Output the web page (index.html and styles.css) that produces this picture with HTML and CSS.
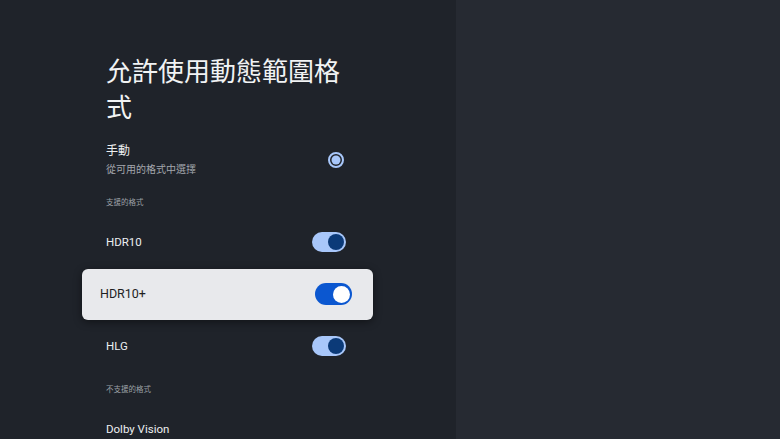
FILE: index.html
```html
<!DOCTYPE html>
<html lang="zh-Hant">
<head>
  <meta charset="UTF-8">
  <meta name="viewport" content="width=device-width, initial-scale=1.0">
  <title>允許使用動態範圍格式</title>
  <link rel="stylesheet" href="styles.css">
</head>
<body>
  <div class="settings-panel">
    <div class="settings-content">
      <h1 class="settings-title">允許使用動態範圍格式</h1>

      <div class="radio-row">
        <div class="row-text">
          <div class="row-label">手動</div>
          <div class="row-sub">從可用的格式中選擇</div>
        </div>
        <svg class="radio" width="18" height="18" viewBox="0 0 18 18">
          <circle cx="9" cy="9" r="7" fill="none" stroke="#a8c7fa" stroke-width="2"/>
          <circle cx="9" cy="9" r="4.5" fill="#a8c7fa"/>
        </svg>
      </div>

      <div class="section-header">支援的格式</div>

      <div class="toggle-row">
        <span class="row-label">HDR10</span>
        <span class="toggle on"><span class="knob"></span></span>
      </div>

      <div class="toggle-row">
        <div class="focus-card">
          <span class="row-label">HDR10+</span>
          <span class="toggle on"><span class="knob"></span></span>
        </div>
      </div>

      <div class="toggle-row">
        <span class="row-label">HLG</span>
        <span class="toggle on"><span class="knob"></span></span>
      </div>

      <div class="section-header">不支援的格式</div>

      <div class="toggle-row">
        <span class="row-label">Dolby Vision</span>
      </div>
    </div>
  </div>
  <div class="side-panel"></div>
</body>
</html>
```

FILE: styles.css
```css
* {
  margin: 0;
  padding: 0;
  box-sizing: border-box;
}

html, body {
  width: 100%;
  height: 100%;
  overflow: hidden;
}

body {
  display: flex;
  background: #262a32;
  font-family: "Roboto", "Noto Sans CJK TC", sans-serif;
  color: #e8eaed;
}

.settings-panel {
  width: 456px;
  height: 100%;
  background: #1f232a;
  padding: 52px 0 0 106px;
}

.settings-content {
  width: 240px;
}

.settings-title {
  font-family: "Noto Sans CJK TC", sans-serif;
  font-weight: 400;
  font-size: 26px;
  line-height: 36px;
  color: #f1f3f4;
  margin-bottom: 17px;
}

.radio-row {
  display: flex;
  align-items: center;
  justify-content: space-between;
  height: 44px;
  padding-bottom: 7px;
}

.radio {
  margin-right: 1px;
  display: block;
}

.row-label {
  font-size: 12px;
  line-height: 18px;
  color: #eceef0;
}

.row-sub {
  font-size: 10px;
  line-height: 16px;
  margin-top: 2px;
  color: #a3a7ad;
}

.section-header {
  font-size: 7.5px;
  line-height: 12px;
  padding: 12px 0 7px;
  color: #9ca0a6;
}

.toggle-row {
  height: 52px;
  display: flex;
  align-items: center;
  justify-content: space-between;
}

.toggle-row .row-label {
  font-size: 11.5px;
  font-weight: 400;
}

.toggle {
  width: 34px;
  height: 20px;
  border-radius: 10px;
  background: #a8c7fa;
  display: flex;
  align-items: center;
  justify-content: flex-end;
  padding: 0 2px;
}

.knob {
  width: 16px;
  height: 16px;
  border-radius: 50%;
  background: #0b3a78;
}

.focus-card {
  flex: 1;
  height: 51px;
  margin: 0 -27px 0 -24px;
  padding: 0 21px 0 18px;
  background: #e8e9ec;
  border-radius: 6px;
  box-shadow: 0 2px 8px rgba(0, 0, 0, 0.45);
  display: flex;
  align-items: center;
  justify-content: space-between;
}

.focus-card .row-label {
  font-size: 12.5px;
  color: #1f1f1f;
}

.focus-card .toggle {
  width: 37px;
  height: 22px;
  border-radius: 11px;
  background: #0b57d0;
}

.focus-card .knob {
  width: 17px;
  height: 17px;
  background: #ffffff;
}
```
